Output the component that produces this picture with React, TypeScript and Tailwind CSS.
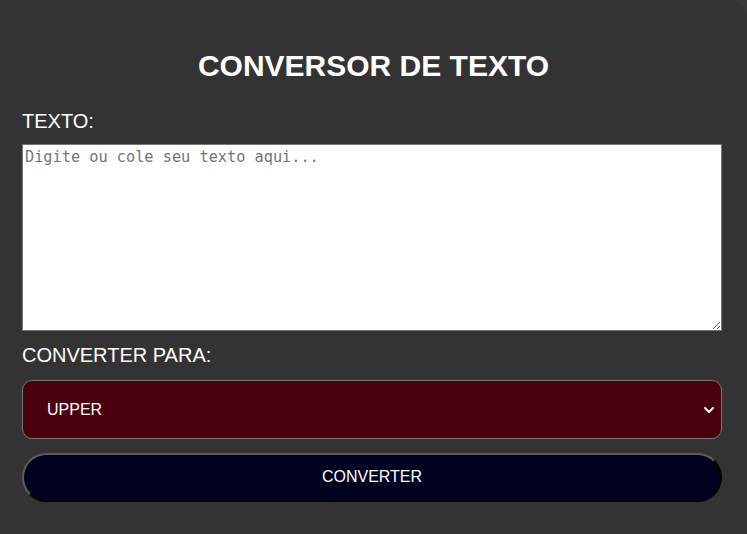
import React from "react";

export default function App() {
  return (
    <div className="min-h-screen bg-[#3a3a3a]" style={{ fontFamily: '"Liberation Sans", Arial, sans-serif' }}>
      <div className="h-[534px] w-full overflow-hidden rounded-tr-[18px] bg-[#333333] px-[22px] pt-[47px]">
        <h1 className="mb-[26px] text-center text-[30px] font-bold leading-[37px] text-white">CONVERSOR DE TEXTO</h1>
        <div className="mb-[11px] text-[20px] leading-[23px] text-white">TEXTO:</div>
        <textarea
          className="block h-[187px] w-[700px] resize-y border border-[#767676] bg-white px-[2px] pt-[3px] text-[15.25px] leading-[18px] text-black outline-none placeholder:text-[#757575]"
          style={{ fontFamily: '"DejaVu Sans Mono", monospace' }}
          placeholder="Digite ou cole seu texto aqui..."
        />
        <div className="mt-[13px] text-[20px] leading-[23px] text-white">CONVERTER PARA:</div>
        <div className="mt-[13px] flex h-[59px] w-[700px] items-center justify-between rounded-[10px] border border-[#777] bg-[#4b000e] pl-[24px] pr-[6px] text-[16px] text-white">
          <span>UPPER</span>
          <svg width="12" height="12" viewBox="0 0 12 12" fill="none">
            <path d="M2 4l4 4 4-4" stroke="white" strokeWidth="2" strokeLinecap="round" strokeLinejoin="round" />
          </svg>
        </div>
        <button className="mt-[14px] flex h-[49px] w-[700px] items-center justify-center rounded-full border-2 border-[#5c5c5c] border-b-black border-r-black bg-[#00001f] pb-[1px] text-[16px] text-white">
          CONVERTER
        </button>
      </div>
    </div>
  );
}
